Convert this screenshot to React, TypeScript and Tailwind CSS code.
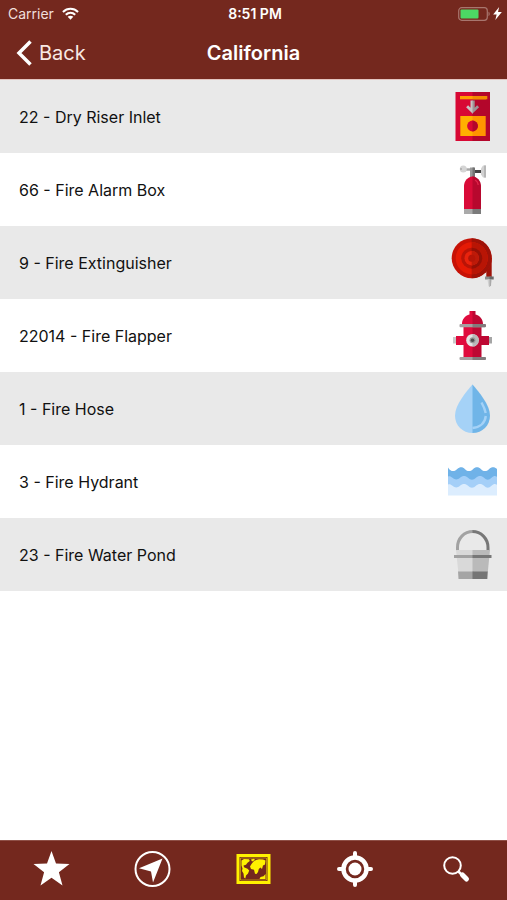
import type { ReactNode } from 'react';

interface Asset {
  count: number;
  name: string;
  icon: ReactNode;
}

interface IconProps {
  children: ReactNode;
}

function AssetIcon({ children }: IconProps) {
  return (
    <svg viewBox="0 0 49 49" className="w-[49px] h-[49px] shrink-0" aria-hidden="true">
      {children}
    </svg>
  );
}

// Each icon is a light shape with a darker right half laid over it.
const riserIcon = (
  <AssetIcon>
    <path fill="#d80834" d="M7.5 0H40v49H7.5z" />
    <path fill="#b3062b" d="M24.5 0H42v49H24.5z" />
    <path fill="#ff9f00" d="M12 4h26v3.3H12z" />
    <path fill="#f28a00" d="M24.5 4h14.8v3.3H24.5z" />
    <path fill="#c9c2c4" d="M22.5 8.500h2.500v13h-.5l-6.400-6.200 2-2 2.400 2.500z" />
    <path fill="#9d9396" d="M24.5 8.500h2.200v7.300l2.400-2.500 2 2-6.600 6.200z" />
    <path fill="#ffb000" d="M12.3 24H36v20H12.300z" />
    <path fill="#ff9500" d="M24.5 24h13.200v20H24.5z" />
    <circle cx="24.5" cy="34" r="5.400" fill="#d80834" />
    <path fill="#b3062b" d="M24.5 28.600a5.400 5.400 0 0 1 0 10.800z" />
  </AssetIcon>
);

const extinguisherIcon = (
  <AssetIcon>
    <path fill="#a7a7a7" d="M17 3.300h6v2.400h-6z" />
    <path fill="#454545" d="M26 5h8v3h-8z" />
    <circle cx="15.300" cy="4" r="3.500" fill="#d5d5d5" />
    <path fill="#b5b5b5" d="M12 3h2v2h-2z" />
    <path fill="#999" d="M22 2.500h4V14h-4z" />
    <path fill="#737373" d="M24.5 2.500H27V14h-2.500z" />
    <path fill="#d2d2d2" d="M33 3.500 35 .5h3v12h-3l-2-3z" />
    <path fill="#b7b7b7" d="M36 .5h2v12h-2z" />
    <path fill="#d90b38" d="M24.5 11.500C19.500 12 16 16 16 21v23h16V21c0-5-2.500-9-7.500-9.500z" />
    <path fill="#b7082e" d="M24.5 11.500C29.500 12 33 16 33 21v23h-8.500z" />
    <path fill="none" stroke="#e0224a" strokeWidth="1.300" d="M27 15c2 1 3 2.500 3.200 5" />
    <path fill="#aaa" d="M16 44h16v5H16z" />
    <path fill="#7b7b7b" d="M24.5 44H33v5h-8.500z" />
  </AssetIcon>
);

const hoseIcon = (
  <AssetIcon>
    <path fill="#9e1208" d="M34 20h9.700v19h-5.400v-8z" />
    <circle cx="23.700" cy="20.200" r="20" fill="#c71206" />
    <path fill="#9e1208" d="M23.700.2a20 20 0 0 1 0 40z" />
    <circle cx="23.700" cy="20.200" r="16" fill="#e51a05" />
    <path fill="#b81505" d="M23.700 4.200a16 16 0 0 1 0 32z" />
    <circle cx="23.700" cy="20.200" r="10.500" fill="#b91407" />
    <path fill="#941006" d="M23.700 9.700a10.500 10.500 0 0 1 0 21z" />
    <circle cx="23.700" cy="20.200" r="7.200" fill="#e9230d" />
    <path fill="#bd1a09" d="M23.700 13a7.200 7.200 0 0 1 0 14.400z" />
    <circle cx="23.700" cy="20.200" r="3.500" fill="#b51507" />
    <path fill="#8b8b8b" d="M37 38.500h6v3h-6z" />
    <path fill="#686868" d="M41.500 38.500h4.200v3h-4.200z" />
    <path fill="#d0d0d0" d="M39.500 41.500H42V49h-.5l-1-1z" />
    <path fill="#a9a9a9" d="M41.500 41.500h2l-.5 6-1.500 1.500z" />
  </AssetIcon>
);

const hydrantIcon = (
  <AssetIcon>
    <path fill="#c9c9c9" d="M5 26h4v6.500H5z" />
    <path fill="#a5a5a5" d="M40 26h4v6.500h-4z" />
    <path fill="#e00b3d" d="M25 0h-3.500v3.500C17 4.500 14 8.500 14 13h1.500v12H8v9h7.500v12H25z" />
    <path fill="#bd0833" d="M24.5 0h3v3.500C32 4.500 35 8.500 35 13h-1.500v12H41v9h-7.500v12h-9z" />
    <rect x="11.500" y="13" width="26" height="3.300" rx="1" fill="#a6a0a1" />
    <path fill="#827b7d" d="M24.5 13H37a1 1 0 0 1 1 1v1.300a1 1 0 0 1-1 1H24.5z" />
    <rect x="11.500" y="46" width="26" height="3" rx="1" fill="#a6a0a1" />
    <path fill="#827b7d" d="M24.5 46H37a1 1 0 0 1 1 1v1a1 1 0 0 1-1 1H24.5z" />
    <circle cx="24.500" cy="29.300" r="6.300" fill="#e3e3e3" />
    <path fill="#b9b9b9" d="M24.5 23a6.300 6.300 0 0 1 0 12.600z" />
    <circle cx="24.500" cy="29.300" r="3" fill="#9a9a9a" />
    <circle cx="24.500" cy="29.300" r="1.800" fill="#505050" />
  </AssetIcon>
);

const dropIcon = (
  <AssetIcon>
    <path fill="#a5d2f7" d="M24.500.500C18 8 7 21 7 31.500 7 41.500 14.500 49 24.500 49h.5V1z" />
    <path fill="#70b5e8" d="M24.500.500C31 8 42 21 42 31.500 42 41.500 34.500 49 24.500 49z" />
    <g fill="none" stroke="#a5d2f7" strokeWidth="2.400">
      <path d="M33.500 18.500c2 3.500 3.500 7 4.200 10.500" />
      <path d="M37.800 32c-.800 7-6 11.500-13.300 12" />
    </g>
  </AssetIcon>
);

const pondIcon = (
  <AssetIcon>
    <path fill="#6fb2e8" d="M0 10.500c3 4.500 6 4.500 9 1.700 3-2.500 5.500-2.500 8 0s5.500 2.500 8 0 5.500-2.500 8 0 5.500 2.500 8 0 5.500-2.500 8-.2V26H0z" />
    <path fill="#a4cff8" d="M0 19.500c1.500-.8 3 0 4.500 1.300 2.500 2.300 5 2.300 7.500 0s5.500-2.500 8 0 5.500 2.500 8 0 5.500-2.500 8 0 5 2.500 7.500 0 4-1.800 5.500-1V34H0z" />
    <path fill="#dcedfe" d="M0 27.500c1.500-.8 3 0 4.500 1.300 2.500 2.300 5 2.300 7.500 0s5.500-2.500 8 0 5.500 2.500 8 0 5.500-2.500 8 0 5 2.500 7.500 0 4-1.800 5.500-1v10.700H0z" />
  </AssetIcon>
);

const bucketIcon = (
  <AssetIcon>
    <path fill="none" stroke="#a2a2a2" strokeWidth="3" d="M9.500 21v-3.500c0-9 6.500-16 15.500-16" />
    <path fill="none" stroke="#777" strokeWidth="3" d="M24.500 1.500c8.500 0 15.500 7 15.500 16V21" />
    <path fill="#d9d9d9" d="M8 20h18v22H10.300z" />
    <path fill="#bababa" d="M24.500 20H42l-2.200 22H24.500z" />
    <path fill="#a5a5a5" d="M10 41.500h16V49H10.500z" />
    <path fill="#757575" d="M24.500 41.500h15.300l-.5 7.500H24.500z" />
    <path fill="#a2a2a2" d="M6 25h20v3H6z" />
    <path fill="#777" d="M24.500 25h19v3h-19z" />
  </AssetIcon>
);

const assets: Asset[] = [
  { count: 22, name: 'Dry Riser Inlet', icon: riserIcon },
  { count: 66, name: 'Fire Alarm Box', icon: extinguisherIcon },
  { count: 9, name: 'Fire Extinguisher', icon: hoseIcon },
  { count: 22014, name: 'Fire Flapper', icon: hydrantIcon },
  { count: 1, name: 'Fire Hose', icon: dropIcon },
  { count: 3, name: 'Fire Hydrant', icon: pondIcon },
  { count: 23, name: 'Fire Water Pond', icon: bucketIcon },
];

function StatusBar() {
  return (
    <div className="grid grid-cols-3 items-center h-[27px] pl-2 pr-[5px] text-sm">
      <div className="flex items-center gap-2 text-[#f0dfdb]">
        Carrier
        <svg viewBox="0 0 18 13" className="w-[17px] h-[13px]" fill="none" stroke="#fff" strokeWidth="2.200">
          <path d="M1 4.800c4.600-4.400 11.400-4.400 16 0M4 7.900c2.900-2.700 7.100-2.700 10 0" />
          <path fill="#fff" stroke="none" d="m9 13-3-3.100c1.700-1.500 4.300-1.500 6 0z" />
        </svg>
      </div>
      <div className="text-center font-semibold">8:51 PM</div>
      <div className="flex items-center justify-end gap-[3px]">
        <svg viewBox="0 0 32 14" className="w-8 h-[14px]">
          <rect x=".700" y=".700" width="28.600" height="12.600" rx="3" fill="none" stroke="#a8766e" strokeWidth="1.200" />
          <rect x="2.500" y="2.500" width="18" height="9" rx="1" fill="#4cd964" />
          <path fill="#a8766e" d="M30.500 4.800c1.600.6 1.600 3.800 0 4.400z" />
        </svg>
        <svg viewBox="0 0 8 12" className="w-[9px] h-[13px]" fill="#fff">
          <path d="M5.500 0 0 7h3.200L2 12l6-7.300H4.500z" />
        </svg>
      </div>
    </div>
  );
}

const tabs = [
  {
    label: 'Favorites',
    icon: (
      <path d="m20.500 2 4.500 12.600 13.500.4-10.600 8.200 3.600 13.300-11-7.700-11 7.700 3.600-13.300L2.500 15l13.500-.4z" />
    ),
  },
  {
    label: 'Nearby',
    icon: (
      <>
        <circle cx="20.500" cy="20" r="17" fill="none" stroke="currentColor" strokeWidth="2" />
        <path d="M30.500 9.500 21 33.500l-2-11-12-3.200z" />
      </>
    ),
  },
  {
    label: 'Map',
    icon: (
      <>
        <path fill="none" stroke="currentColor" strokeWidth="3" d="M5 6.500h31v27H5z" />
        <path fill="none" stroke="currentColor" strokeWidth=".5" d="M7.500 9h26v22h-26z" />
        <path d="M8.500 11.500 11 10l5 .3.800 1.700-2.300 1.800-1.500 2-2.500.7.500 1.700 3.500 1.500 1.700 1.800-1.200 3-2 2-.7 3-1.300-1-.5-4-1.500-2.500.5-2.500L8.500 16.500z" />
        <path d="m18 10.500 3-.7 1 1.200-3 1.500zM18.500 15l2-2.500 2.500-1.500 3-.7 4 .2 2.500 1-.5 4-2 1-1 3.500-1.500-1.500-1.700 1.500-.8 3-1.500 2-1.500-.3-1-4-3-.7-1-2.500zM32.500 25v5h-6l1-2 3-.8z" />
      </>
    ),
  },
  {
    label: 'Locate',
    icon: (
      <>
        <circle cx="20" cy="20" r="11.500" fill="none" stroke="currentColor" strokeWidth="4.500" />
        <circle cx="20" cy="20" r="6.500" />
        <path fill="none" stroke="currentColor" strokeWidth="4" strokeLinecap="round" d="M20 4v4M20 32v4M4 20h4M32 20h4" />
      </>
    ),
  },
  {
    label: 'Search',
    icon: (
      <>
        <circle cx="16.500" cy="16.500" r="8.300" fill="none" stroke="currentColor" strokeWidth="2" />
        <path fill="none" stroke="currentColor" strokeWidth="2.500" d="m22 22 4 4" />
        <path fill="none" stroke="currentColor" strokeWidth="5" strokeLinecap="round" d="m26.500 26 4 4" />
      </>
    ),
  },
];

export default function App() {
  return (
    <div className="flex flex-col min-h-screen bg-white font-['Inter',sans-serif]">
      <header className="bg-[#74281e] text-white border-b border-[#e3c4bf]">
        <StatusBar />
        <div className="grid grid-cols-[1fr_auto_1fr] items-center h-[52px] px-4">
          <button type="button" className="flex items-center gap-[7px] text-xl text-[#f8e8e4] justify-self-start">
            <svg viewBox="0 0 16 26" className="w-4 h-[26px]" fill="none" stroke="#fff" strokeWidth="3.500" aria-hidden="true">
              <path d="M14.500 1.500 3 13l11.500 11.500" />
            </svg>
            Back
          </button>
          <h1 className="text-xl font-semibold">California</h1>
        </div>
      </header>

      <main className="flex-1">
        <ul>
          {assets.map((asset) => (
            <li
              key={asset.name}
              className="flex items-center justify-between h-[73px] pl-[19px] pr-[10px] odd:bg-[#e9e9e9] text-base text-[#111]"
            >
              <span>
                {asset.count} - {asset.name}
              </span>
              {asset.icon}
            </li>
          ))}
        </ul>
      </main>

      <nav className="grid grid-cols-5 h-[60px] pb-[3px] bg-[#74281e] border-t border-[#8f5047]">
        {tabs.map((tab) => (
          <button
            key={tab.label}
            type="button"
            aria-label={tab.label}
            className={`flex items-center justify-center ${tab.label === 'Map' ? 'text-[#fff200]' : 'text-white'}`}
          >
            <svg viewBox="0 0 40 40" className="w-10 h-10" fill="currentColor" aria-hidden="true">
              {tab.icon}
            </svg>
          </button>
        ))}
      </nav>
    </div>
  );
}
